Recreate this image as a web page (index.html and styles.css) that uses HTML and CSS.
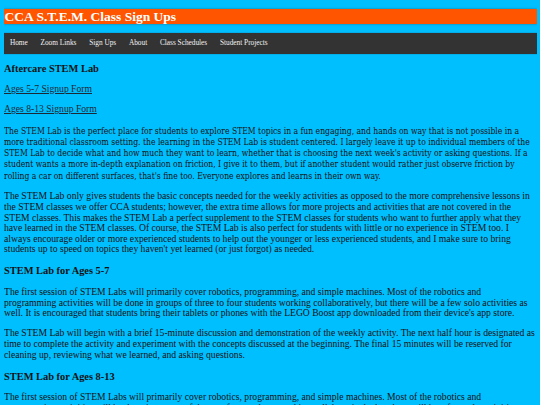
FILE: index.html
```html
<!DOCTYPE html>
<html lang="en">
<head>
<meta charset="utf-8">
<title>CCA S.T.E.M. Class Sign Ups</title>
<link rel="stylesheet" href="styles.css">
</head>
<body>
<h1 class="title">CCA S.T.E.M. Class Sign Ups</h1>
<nav class="topnav">
  <a href="#">Home</a>
  <a href="#">Zoom Links</a>
  <a href="#">Sign Ups</a>
  <a href="#">About</a>
  <a href="#">Class Schedules</a>
  <a href="#">Student Projects</a>
</nav>
<main class="content">
  <h3 class="section first">Aftercare STEM Lab</h3>
  <p><a class="link" href="#">Ages 5-7 Signup Form</a></p>
  <p><a class="link" href="#">Ages 8-13 Signup Form</a></p>
  <p class="intro">The STEM Lab is the perfect place for students to explore STEM topics in a fun engaging, and hands on way that is not possible in a more traditional classroom setting. the learning in the STEM Lab is student centered. I largely leave it up to individual members of the STEM Lab to decide what and how much they want to learn, whether that is choosing the next week's activity or asking questions. If a student wants a more in-depth explanation on friction, I give it to them, but if another student would rather just observe friction by rolling a car on different surfaces, that's fine too. Everyone explores and learns in their own way.</p>
  <p>The STEM Lab only gives students the basic concepts needed for the weekly activities as opposed to the more comprehensive lessons in the STEM classes we offer CCA students; however, the extra time allows for more projects and activities that are not covered in the STEM classes. This makes the STEM Lab a perfect supplement to the STEM classes for students who want to further apply what they have learned in the STEM classes. Of course, the STEM Lab is also perfect for students with little or no experience in STEM too. I always encourage older or more experienced students to help out the younger or less experienced students, and I make sure to bring students up to speed on topics they haven't yet learned (or just forgot) as needed.</p>
  <h3 class="section">STEM Lab for Ages 5-7</h3>
  <p>The first session of STEM Labs will primarily cover robotics, programming, and simple machines. Most of the robotics and programming activities will be done in groups of three to four students working collaboratively, but there will be a few solo activities as well. It is encouraged that students bring their tablets or phones with the LEGO Boost app downloaded from their device's app store.</p>
  <p>The STEM Lab will begin with a brief 15-minute discussion and demonstration of the weekly activity. The next half hour is designated as time to complete the activity and experiment with the concepts discussed at the beginning. The final 15 minutes will be reserved for cleaning up, reviewing what we learned, and asking questions.</p>
  <h3 class="section">STEM Lab for Ages 8-13</h3>
  <p>The first session of STEM Labs will primarily cover robotics, programming, and simple machines. Most of the robotics and programming activities will be done in groups of three to four students working collaboratively, but there will be a few solo activities as well.</p>
</main>
</body>
</html>
```
FILE: styles.css
```css
html {
  background: #00bfff;
}
body {
  margin: 0 3.5px;
  font-family: "Liberation Serif", serif;
  font-size: 9.65px;
  line-height: 10.6px;
  color: #111;
  background: #00bfff;
}
.title {
  margin: 9px 0 0;
  background: #ff5500;
  color: #fff;
  font-size: 13.5px;
  line-height: 15px;
  font-weight: bold;
  padding: 0 1px;
  box-shadow: 0 0 2px rgba(60, 60, 60, 0.6);
}
.topnav {
  margin-top: 9px;
  background: #333;
  display: flex;
  height: 21px;
  align-items: center;
  box-shadow: 0 0 1px rgba(40, 40, 40, 0.6);
}
.topnav a {
  color: #f2f2f2;
  text-decoration: none;
  font-size: 7.3px;
  padding: 0 6.4px;
}
.content {
  padding: 0 1px 0 0.5px;
}
.section {
  font-size: 10.4px;
  line-height: 11px;
  margin: 10.5px 0;
}
.section.first {
  margin-top: 8.5px;
}
.content p {
  margin: 9.6px 0;
}
.content p.intro {
  margin-top: 11px;
  font-family: "DejaVu Serif Condensed", "DejaVu Serif", serif;
  font-size: 8.5px;
  line-height: 11.2px;
}
.link {
  color: #1c2833;
}
```
